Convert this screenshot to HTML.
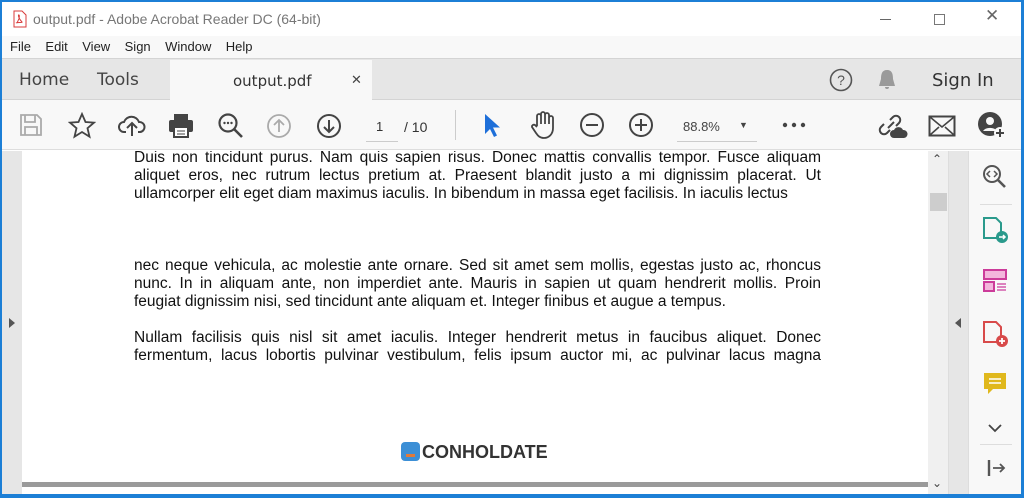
<!DOCTYPE html>
<html><head><meta charset="utf-8"><style>
*{margin:0;padding:0;box-sizing:border-box}
body{width:1024px;height:498px;overflow:hidden;background:#1c7fd6;font-family:"Liberation Sans",Arial,sans-serif;position:relative}
.win{position:absolute;left:2px;top:2px;width:1019px;height:492px;background:#fff;overflow:hidden}
.a{position:absolute}
.t{font-family:"DejaVu Sans","Liberation Sans",sans-serif}
.txt{position:absolute;left:112px;width:687px;font-size:15.5px;line-height:18px;color:#111}
.txt div{text-align:justify;text-align-last:justify;white-space:nowrap;height:18px}
.txt div.l{text-align-last:left}
svg{position:absolute}
</style></head><body>
<div class="win">
 <svg style="left:11px;top:8px" width="14" height="18" viewBox="0 0 14 18"><path d="M1 1h8l4 4v12H1z" fill="#fff" stroke="#d83b3b"/><path d="M4 13c2-4 3-7 2-8s-1 3 3 7c1 1-5 0-6 1" fill="none" stroke="#d83b3b"/></svg>
 <div class="a" style="left:31px;top:9px;font-size:14px;color:#777">output.pdf - Adobe Acrobat Reader DC (64-bit)</div>
 <div class="a" style="left:878px;top:17px;width:11px;height:1px;background:#666"></div>
 <div class="a" style="left:932px;top:12px;width:11px;height:11px;border:1px solid #777"></div>
 <div class="a" style="left:983px;top:4px;font-size:17px;color:#666">✕</div>
 <div class="a" style="left:0;top:34px;width:1019px;height:22px;background:#f8f8f8"></div>
 <div class="a" style="left:8px;top:37px;font-size:13px;color:#222">File&nbsp;&nbsp;&nbsp; Edit&nbsp;&nbsp;&nbsp; View&nbsp;&nbsp;&nbsp; Sign&nbsp;&nbsp;&nbsp; Window&nbsp;&nbsp;&nbsp; Help</div>
 <div class="a" style="left:0;top:56px;width:1019px;height:42px;background:#e6e6e6;border-top:1px solid #d4d4d4;border-bottom:1px solid #d4d4d4"></div>
 <div class="a" style="left:168px;top:58px;width:202px;height:41px;background:#f8f8f8"></div>
 <div class="a t" style="left:17px;top:68px;font-size:17px;color:#444">Home</div>
 <div class="a t" style="left:95px;top:68px;font-size:17px;color:#444">Tools</div>
 <div class="a t" style="left:231px;top:70px;font-size:15px;color:#333">output.pdf</div>
 <div class="a" style="left:349px;top:70px;font-size:13px;color:#444">✕</div>
 <svg style="left:827px;top:66px" width="24" height="24"><circle cx="12" cy="12" r="10.5" fill="none" stroke="#555" stroke-width="1.6"/><text x="12" y="17" font-size="14" text-anchor="middle" fill="#555" font-family="Liberation Sans">?</text></svg>
 <svg style="left:874px;top:66px" width="22" height="24"><path d="M11 2c-5 0-6 4-6 9l-2 7h16l-2-7c0-5-1-9-6-9zM9 19a2 2 0 004 0" fill="#9a9a9a"/></svg>
 <div class="a t" style="left:930px;top:68px;font-size:18px;color:#333">Sign In</div>
 <div class="a" style="left:0;top:98px;width:1019px;height:50px;background:#f8f8f8;border-bottom:1px solid #ddd"></div>
 <svg style="left:17px;top:111px" width="24" height="24"><path d="M2 2h16l4 4v16H2z M6 2v7h10V2 M6 22v-8h12v8" fill="none" stroke="#aaa" stroke-width="1.8"/></svg>
 <svg style="left:66px;top:110px" width="28" height="27"><path d="M14 2l3.5 8 8.5.6-6.5 5.6 2 8.5L14 20l-7.5 4.7 2-8.5L2 10.6l8.5-.6z" fill="none" stroke="#444" stroke-width="1.8"/></svg>
 <svg style="left:116px;top:110px" width="28" height="26"><path d="M8 20H6a5 5 0 010-10 8 8 0 0115 0 5 5 0 011 10h-2M14 24V12M9 16l5-5 5 5" fill="none" stroke="#444" stroke-width="2"/></svg>
 <svg style="left:165px;top:110px" width="28" height="27"><rect x="7" y="2" width="14" height="6" fill="#444"/><rect x="2" y="8" width="24" height="12" rx="2" fill="#444"/><rect x="7" y="15" width="14" height="10" fill="#fff" stroke="#444" stroke-width="2"/><path d="M10 19h8M10 22h8" stroke="#444"/></svg>
 <svg style="left:215px;top:110px" width="28" height="28"><circle cx="11" cy="11" r="8.5" fill="none" stroke="#444" stroke-width="2.2"/><path d="M17 17l8 8" stroke="#444" stroke-width="2.6"/><circle cx="7.5" cy="11" r="1.2" fill="#444"/><circle cx="11" cy="11" r="1.2" fill="#444"/><circle cx="14.5" cy="11" r="1.2" fill="#444"/></svg>
 <svg style="left:264px;top:111px" width="26" height="26"><circle cx="13" cy="13" r="11" fill="none" stroke="#aaa" stroke-width="1.8"/><path d="M13 19V7M8 12l5-5 5 5" fill="none" stroke="#aaa" stroke-width="1.8"/></svg>
 <svg style="left:314px;top:111px" width="26" height="26"><circle cx="13" cy="13" r="11" fill="none" stroke="#444" stroke-width="2"/><path d="M13 7v12M8 14l5 5 5-5" fill="none" stroke="#444" stroke-width="2"/></svg>
 <div class="a" style="left:374px;top:117px;font-size:13px;color:#333">1</div>
 <div class="a" style="left:364px;top:139px;width:32px;height:1px;background:#ccc"></div>
 <div class="a" style="left:402px;top:117px;font-size:14px;color:#333">/ 10</div>
 <div class="a" style="left:453px;top:108px;width:1px;height:30px;background:#ccc"></div>
 <svg style="left:480px;top:110px" width="20" height="27"><path d="M3 2v20l5-5 4 8 3-1.5-4-8h7z" fill="#1e6fd9"/></svg>
 <svg style="left:527px;top:108px" width="28" height="30"><path d="M8 16V6a2 2 0 014 0v8V4a2 2 0 014 0v10V5a2 2 0 014 0v9V8a2 2 0 014 0v10c0 6-4 10-9 10-4 0-6-2-8-5l-4-6a2 2 0 013-2l2 2" fill="none" stroke="#444" stroke-width="1.8"/></svg>
 <svg style="left:577px;top:110px" width="26" height="26"><circle cx="13" cy="13" r="11" fill="none" stroke="#444" stroke-width="2"/><path d="M7 13h12" stroke="#444" stroke-width="2"/></svg>
 <svg style="left:626px;top:110px" width="26" height="26"><circle cx="13" cy="13" r="11" fill="none" stroke="#444" stroke-width="2"/><path d="M7 13h12M13 7v12" stroke="#444" stroke-width="2"/></svg>
 <div class="a" style="left:681px;top:117px;font-size:13px;color:#444">88.8%</div>
 <div class="a" style="left:737px;top:118px;font-size:9px;color:#444">▼</div>
 <div class="a" style="left:675px;top:139px;width:80px;height:1px;background:#ccc"></div>
 <svg style="left:780px;top:120px" width="24" height="6"><circle cx="3" cy="3" r="2.2" fill="#444"/><circle cx="12" cy="3" r="2.2" fill="#444"/><circle cx="21" cy="3" r="2.2" fill="#444"/></svg>
 <svg style="left:876px;top:110px" width="30" height="28"><path d="M12 8l3-3a4 4 0 016 6l-3 3M12 18l-3 3a4 4 0 01-6-6l3-3M10 16l6-6" fill="none" stroke="#444" stroke-width="2"/><path d="M16 26a4 4 0 010-8 5 5 0 019 0 3 3 0 011 8z" fill="#444"/></svg>
 <svg style="left:926px;top:113px" width="28" height="22"><rect x="1.5" y="1.5" width="25" height="19" fill="none" stroke="#444" stroke-width="2"/><path d="M2 2l12 10 12-10M2 20l9-8M26 20l-9-8" fill="none" stroke="#444" stroke-width="1.6"/></svg>
 <svg style="left:975px;top:109px" width="30" height="28"><circle cx="13" cy="13" r="12" fill="#444"/><circle cx="13" cy="10" r="4" fill="#f8f8f8"/><path d="M6 20a8 6 0 0114 0" fill="#f8f8f8"/><circle cx="23" cy="22" r="6" fill="#f8f8f8"/><path d="M23 18v8M19 22h8" stroke="#444" stroke-width="2"/></svg>
 <div class="a" style="left:0;top:149px;width:20px;height:343px;background:#e6e6e6"></div>
 <div class="a" style="left:7px;top:316px;width:0;height:0;border-left:6px solid #555;border-top:5px solid transparent;border-bottom:5px solid transparent"></div>
 <div class="a" style="left:20px;top:149px;width:906px;height:343px;background:#fff;overflow:hidden">
  <div class="txt" style="top:-2px">
   <div>Duis non tincidunt purus. Nam quis sapien risus. Donec mattis convallis tempor. Fusce aliquam</div>
   <div>aliquet eros, nec rutrum lectus pretium at. Praesent blandit justo a mi dignissim placerat. Ut</div>
   <div class="l">ullamcorper elit eget diam maximus iaculis. In bibendum in massa eget facilisis. In iaculis lectus</div>
  </div>
  <div class="txt" style="top:106px">
   <div>nec neque vehicula, ac molestie ante ornare. Sed sit amet sem mollis, egestas justo ac, rhoncus</div>
   <div>nunc. In in aliquam ante, non imperdiet ante. Mauris in sapien ut quam hendrerit mollis. Proin</div>
   <div class="l">feugiat dignissim nisi, sed tincidunt ante aliquam et. Integer finibus et augue a tempus.</div>
  </div>
  <div class="txt" style="top:178px">
   <div>Nullam facilisis quis nisl sit amet iaculis. Integer hendrerit metus in faucibus aliquet. Donec</div>
   <div>fermentum, lacus lobortis pulvinar vestibulum, felis ipsum auctor mi, ac pulvinar lacus magna</div>
  </div>
  <div class="a" style="left:379px;top:291px;width:19px;height:19px;border-radius:4px;background:#3c8fd6"></div>
  <div class="a" style="left:384px;top:303px;width:9px;height:3px;background:#e07a3a"></div>
  <div class="a" style="left:400px;top:291px;font-size:18px;font-weight:bold;color:#333;letter-spacing:0px">CONHOLDATE</div>
  <div class="a" style="left:0;top:331px;width:906px;height:5px;background:#9a9a9a"></div>
 </div>
 <div class="a" style="left:926px;top:149px;width:20px;height:343px;background:#f0f0f0"></div>
 <div class="a" style="left:930px;top:150px;font-size:12px;color:#444">⌃</div>
 <div class="a" style="left:928px;top:191px;width:17px;height:18px;background:#cdcdcd"></div>
 <div class="a" style="left:930px;top:474px;font-size:12px;color:#444">⌄</div>
 <div class="a" style="left:946px;top:149px;width:20px;height:343px;background:#e6e6e6;border-left:1px solid #ddd"></div>
 <div class="a" style="left:953px;top:316px;width:0;height:0;border-right:6px solid #555;border-top:5px solid transparent;border-bottom:5px solid transparent"></div>
 <div class="a" style="left:966px;top:149px;width:53px;height:343px;background:#f8f8f8;border-left:1px solid #ddd"></div>
 <svg style="left:980px;top:162px" width="26" height="26"><circle cx="10" cy="10" r="8" fill="none" stroke="#555" stroke-width="2"/><path d="M16 16l7 7" stroke="#555" stroke-width="2.6"/><path d="M8 7l-3 3 3 3M12 7l3 3-3 3" fill="none" stroke="#555" stroke-width="1.5"/></svg>
 <div class="a" style="left:978px;top:202px;width:32px;height:1px;background:#ddd"></div>
 <svg style="left:980px;top:214px" width="28" height="28"><path d="M2 2h12l5 5v15H2z" fill="none" stroke="#2a9a8c" stroke-width="2"/><circle cx="20" cy="21" r="6" fill="#2a9a8c"/><path d="M17 21h6M21 19l2 2-2 2" stroke="#fff" stroke-width="1.5" fill="none"/></svg>
 <svg style="left:980px;top:266px" width="28" height="28"><rect x="2" y="2" width="22" height="9" fill="#f3b6dc" stroke="#cc3c9a" stroke-width="2"/><rect x="2" y="14" width="10" height="9" fill="#f3b6dc" stroke="#cc3c9a" stroke-width="2"/><path d="M15 16h9M15 19h9M15 22h9" stroke="#cc3c9a" stroke-width="1.3"/></svg>
 <svg style="left:980px;top:318px" width="28" height="28"><path d="M2 2h12l5 5v15H2z" fill="none" stroke="#d84a4a" stroke-width="2"/><circle cx="20" cy="21" r="6" fill="#d84a4a"/><path d="M17 21h6M20 18v6" stroke="#fff" stroke-width="1.8"/></svg>
 <svg style="left:981px;top:370px" width="24" height="26"><path d="M1 1h22v16H10l-5 5v-5H1z" fill="#e0b81c"/><path d="M6 7h12M6 11h12" stroke="#fff" stroke-width="1.6"/></svg>
 <svg style="left:985px;top:420px" width="16" height="12"><path d="M2 3l6 6 6-6" fill="none" stroke="#444" stroke-width="1.8"/></svg>
 <div class="a" style="left:978px;top:442px;width:32px;height:1px;background:#ddd"></div>
 <svg style="left:985px;top:456px" width="20" height="20"><path d="M2 2v16" stroke="#555" stroke-width="2.4"/><path d="M6 10h11M13 6l4 4-4 4" fill="none" stroke="#555" stroke-width="1.8"/></svg>
</div>
</body></html>
